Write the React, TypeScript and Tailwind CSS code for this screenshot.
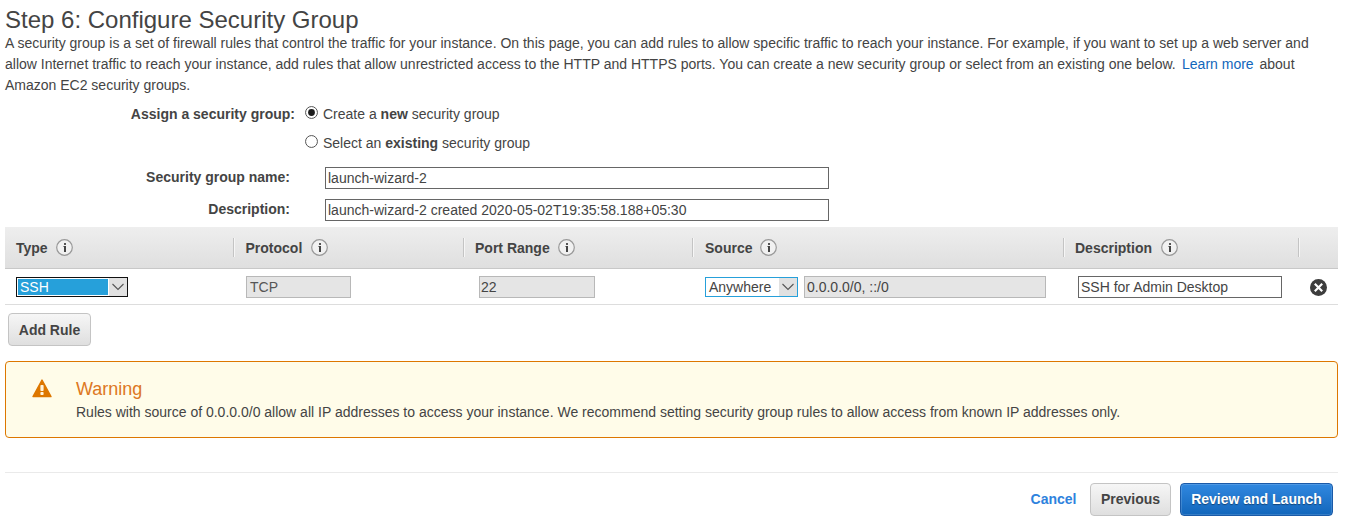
import type { ReactNode } from "react";

function InfoIcon() {
  return (
    <svg width="18" height="18" viewBox="0 0 18 18" className="shrink-0">
      <circle cx="8.5" cy="8.5" r="7.8" fill="#f1f1f1" stroke="#999" strokeWidth="1.2" />
      <rect x="7" y="7" width="1" height="1" fill="#999" />
      <rect x="8" y="7" width="2" height="6" fill="#444" />
      <rect x="8" y="4" width="2" height="2" fill="#555" />
    </svg>
  );
}

function Chevron() {
  return (
    <svg width="18" height="18" viewBox="0 0 18 18" className="block">
      <path d="M3.5 6L9 11.5L14.5 6" fill="none" stroke="#555" strokeWidth="1.1" />
    </svg>
  );
}

function Radio({ checked = false }: { checked?: boolean }) {
  return (
    <svg width="13" height="13" viewBox="0 0 13 13" className="shrink-0" role="radio" aria-checked={checked}>
      <circle cx="6.5" cy="6.5" r="5.95" fill="#fff" stroke="#555" strokeWidth="1" />
      {checked && <circle cx="6.5" cy="6.5" r="3.4" fill="#1c1c1c" />}
    </svg>
  );
}

function Field({ className, children }: { className: string; children: ReactNode }) {
  return (
    <div
      role="textbox"
      className={"flex h-[22px] shrink-0 items-center border pl-[2px] leading-[20px] whitespace-nowrap " + className}
    >
      {children}
    </div>
  );
}

function HeaderCell({ className, children }: { className: string; children?: ReactNode }) {
  return (
    <div className={"flex shrink-0 items-center " + className}>
      <div className="h-[19px] w-[2px] border-l border-r border-l-[#c4c4c4] border-r-[#f6f6f6]" />
      {children}
    </div>
  );
}

const greyButton =
  "flex h-[33px] items-center justify-center rounded-[4px] border border-[#c4c4c4] bg-linear-to-b from-[#f6f6f6] to-[#dfdfdf] font-bold";

export default function App() {
  return (
    <div
      className="flex h-[528px] w-[1347px] flex-col overflow-hidden bg-white pr-[9px] pl-[5px] text-[14px] leading-[21px] text-[#444]"
      style={{ fontFamily: '"Liberation Sans", Arial, sans-serif' }}
    >
      <h1 className="mt-[5px] h-[28px] text-[24px] leading-[29px]">Step 6: Configure Security Group</h1>
      <p className="whitespace-nowrap">
        A security group is a set of firewall rules that control the traffic for your instance. On this page, you can
        add rules to allow specific traffic to reach your instance. For example, if you want to set up a web server and
        <br />
        allow Internet traffic to reach your instance, add rules that allow unrestricted access to the HTTP and HTTPS
        ports. You can create a new security group or select from an existing one below.
        <a className="mr-[2px] ml-[2.5px] text-[#1166bb]"> Learn more</a> about
        <br />
        Amazon EC2 security groups.
      </p>

      <div className="mt-[7px] flex h-[64px]">
        <div className="w-[290px] pt-[1px] text-right font-bold">Assign a security group:</div>
        <div className="ml-[10px] flex flex-col gap-[8px] pt-[1px]">
          <label className="flex h-[21px] gap-[5px]">
            <span className="pt-[2px]">
              <Radio checked />
            </span>
            <span>
              Create a <b>new</b> security group
            </span>
          </label>
          <label className="flex h-[21px] gap-[5px]">
            <span className="pt-[2px]">
              <Radio />
            </span>
            <span>
              Select an <b>existing</b> security group
            </span>
          </label>
        </div>
      </div>
      <div className="flex h-[32px]">
        <div className="mr-[35px] w-[285px] text-right font-bold">Security group name:</div>
        <Field className="w-[504px] border-[#666]">launch-wizard-2</Field>
      </div>
      <div className="flex h-[28px]">
        <div className="mr-[35px] w-[285px] text-right font-bold">Description:</div>
        <Field className="w-[504px] border-[#666]">launch-wizard-2 created 2020-05-02T19:35:58.188+05:30</Field>
      </div>

      <div className="flex h-[42px] items-stretch border-b border-[#c8c8c8] bg-linear-to-b from-[#eeeeee] to-[#dfdfdf] font-bold">
        <div className="flex w-[228px] shrink-0 items-center gap-[8px] pl-[11px]">
          <span className="pt-[2px]">Type</span>
          <InfoIcon />
        </div>
        <HeaderCell className="w-[230px]">
          <span className="mr-[9px] ml-[10.5px] pt-[2px]">Protocol</span>
          <InfoIcon />
        </HeaderCell>
        <HeaderCell className="w-[229px]">
          <span className="mr-[8px] ml-[10px] pt-[2px]">Port Range</span>
          <InfoIcon />
        </HeaderCell>
        <HeaderCell className="w-[371px]">
          <span className="mr-[8px] ml-[11px] pt-[2px]">Source</span>
          <InfoIcon />
        </HeaderCell>
        <HeaderCell className="w-[235px]">
          <span className="mr-[9px] ml-[10px] pt-[2px]">Description</span>
          <InfoIcon />
        </HeaderCell>
        <HeaderCell className="w-[40px]" />
      </div>

      <div className="flex h-[36px] shrink-0 items-center border-b border-[#dddddd]">
        <div className="w-[230px] pl-[11px]">
          <div role="combobox" className="flex h-[20px] w-[112px] border border-[#111] bg-white">
            <div className="my-px ml-px flex-1 bg-[#26a0da] pl-[2px] leading-[17px] text-white">SSH</div>
            <div className="ml-px h-full w-[18px] bg-[#e1e1e1]">
              <Chevron />
            </div>
          </div>
        </div>
        <div className="w-[233px] pl-[11px]">
          <Field className="w-[105px] border-[#b8b8b8] bg-[#e5e5e5] text-[#555]">
            <span className="ml-px">TCP</span>
          </Field>
        </div>
        <div className="w-[226px] pl-[11px]">
          <Field className="w-[116px] border-[#b8b8b8] bg-[#e5e5e5]">
            <span className="-ml-px">22</span>
          </Field>
        </div>
        <div className="flex w-[373px] items-center gap-[6px] pl-[11px]">
          <div role="combobox" className="flex h-[20px] w-[93px] shrink-0 border border-[#26a0da] bg-white">
            <div className="flex-1 pl-[3px] leading-[19px]">Anywhere</div>
            <div className="w-[18px] bg-[#e1e1e1]">
              <Chevron />
            </div>
          </div>
          <Field className="w-[242px] border-[#b8b8b8] bg-[#e5e5e5]">0.0.0.0/0, ::/0</Field>
        </div>
        <div className="w-[243px] pl-[11px]">
          <Field className="w-[204px] border-[#666]">SSH for Admin Desktop</Field>
        </div>
        <svg width="18" height="18" viewBox="0 0 18 18">
          <circle cx="8.5" cy="9.5" r="8.5" fill="#3d3d3d" />
          <path d="M4.8 5.8l7.4 7.4M12.2 5.8l-7.4 7.4" stroke="#fff" strokeWidth="2.2" />
        </svg>
      </div>

      <button className={"mt-[8px] ml-[3px] w-[83px] shrink-0 pt-[2px] " + greyButton}>Add Rule</button>

      <div className="mt-[15px] flex h-[77px] shrink-0 rounded-[4px] border border-[#dd7700] bg-[#fffce9]">
        <svg width="20" height="19" viewBox="0 0 20 19" className="mt-[17px] ml-[26px] shrink-0">
          <path d="M10 1L19 17.6H1z" fill="#dd7700" stroke="#dd7700" strokeWidth="1.4" strokeLinejoin="round" />
          <rect x="8.4" y="6" width="3.2" height="6" rx="0.8" fill="#fff4dc" />
          <rect x="8.4" y="13" width="3.2" height="3" rx="0.8" fill="#fff4dc" />
        </svg>
        <div className="ml-[24px] pt-[16px]">
          <h2 className="h-[24px] text-[18px] leading-[22px] text-[#dd7722]">Warning</h2>
          <p className="whitespace-nowrap">
            Rules with source of 0.0.0.0/0 allow all IP addresses to access your instance. We recommend setting
            security group rules to allow access from known IP addresses only.
          </p>
        </div>
      </div>

      <div className="mt-[34px] flex items-center justify-end border-t border-[#eaeaea] pt-[10px] pr-[5px]">
        <a className="mr-[13.5px] font-bold text-[#2e82dd]">Cancel</a>
        <button className={"mr-[9px] w-[81px] " + greyButton}>Previous</button>
        <button className="flex h-[33px] w-[153px] items-center justify-center rounded-[4px] border border-[#1a5aa8] bg-linear-to-b from-[#3088e0] to-[#1166bb] font-bold text-white [box-shadow:inset_0_0_0_1px_rgba(255,255,255,0.15)] [text-shadow:0_1px_1px_rgba(0,0,0,0.4)]">
          Review and Launch
        </button>
      </div>
    </div>
  );
}
